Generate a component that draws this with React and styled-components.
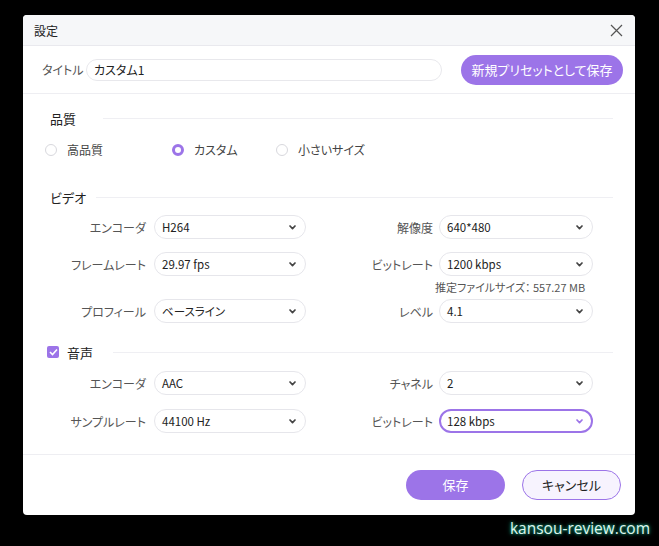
import React from 'react';
import styled, { createGlobalStyle } from 'styled-components';

const PURPLE = '#9c74e8';

const GlobalStyle = createGlobalStyle`
  html, body {
    margin: 0;
    padding: 0;
    background: #000;
  }
  body {
    font-family: 'Noto Sans CJK JP', 'Noto Sans', sans-serif;
    font-feature-settings: "palt";
  }
`;

const Page = styled.div`
  width: 659px;
  height: 546px;
  padding: 15px 0 0 23px;
  box-sizing: border-box;
  background: #000;
`;

const Dialog = styled.div`
  width: 612px;
  height: 500px;
  background: #fff;
  border-radius: 4px;
  overflow: hidden;
  display: flex;
  flex-direction: column;
`;

const TitleBar = styled.div`
  height: 30px;
  flex: none;
  background: #f6f7f9;
  border-bottom: 1px solid #e9e9ee;
  display: flex;
  align-items: center;
  justify-content: space-between;
  padding: 0 12px 0 11px;
  font-size: 12px;
  color: #222;
`;

const CloseButton = styled.div`
  width: 14px;
  height: 14px;
  display: flex;
  align-items: center;
  justify-content: center;
`;

const PresetRow = styled.div`
  height: 47px;
  flex: none;
  border-bottom: 1px solid #eeeef2;
  display: flex;
  align-items: center;
  padding: 0 12px 0 19px;
`;

const PresetLabel = styled.span`
  width: 44px;
  font-size: 12px;
  color: #555;
`;

const TitleInput = styled.div`
  width: 356px;
  height: 22px;
  box-sizing: border-box;
  border: 1px solid #e8e8ec;
  border-radius: 11px;
  padding-left: 7px;
  display: flex;
  align-items: center;
  font-size: 12px;
  color: #222;
`;

const PresetButton = styled.div`
  margin-left: auto;
  width: 162px;
  height: 30px;
  border-radius: 15px;
  background: ${PURPLE};
  color: #fff;
  font-size: 13px;
  display: flex;
  align-items: center;
  justify-content: center;
`;

const Body = styled.div`
  flex: 1;
  padding: 14px 22px 0 0;
  display: flex;
  flex-direction: column;
`;

const Heading = styled.div`
  height: 20px;
  display: flex;
  align-items: center;
  padding-left: ${p => p.$indent}px;
  margin-top: ${p => p.$top || 0}px;
  font-size: 13px;
  color: #222;
  &::after {
    content: '';
    flex: 1;
    height: 1px;
    background: #efeff3;
    margin-left: ${p => p.$lineGap}px;
  }
`;

const RadioGroup = styled.div`
  display: grid;
  grid-template-columns: 127px 104px auto;
  padding-left: 22px;
  margin-top: 13px;
  height: 16px;
  align-items: center;
`;

const RadioItem = styled.div`
  display: flex;
  align-items: center;
  gap: 10px;
  font-size: 12px;
  color: #444;
`;

const RadioDot = styled.span`
  width: 12px;
  height: 12px;
  box-sizing: border-box;
  border-radius: 50%;
  border: ${p => (p.$on ? `3.5px solid ${PURPLE}` : '1px solid #d8d8dd')};
  background: #fff;
`;

const CheckBox = styled.span`
  width: 12px;
  height: 12px;
  border-radius: 2px;
  background: ${PURPLE};
  display: inline-flex;
  align-items: center;
  justify-content: center;
  margin-right: 8px;
`;

const FieldRow = styled.div`
  display: grid;
  grid-template-columns: 131px 152px 133px 154px;
  align-items: center;
  margin-top: ${p => p.$top}px;
`;

const Label = styled.div`
  text-align: right;
  padding-right: ${p => p.$pad || 8}px;
  font-size: 12px;
  color: #555;
`;

const Select = styled.div`
  height: 24px;
  box-sizing: border-box;
  border: ${p => (p.$focus ? `2px solid ${PURPLE}` : '1px solid #e6e6eb')};
  border-radius: 12px;
  display: flex;
  align-items: center;
  padding: 0 ${p => (p.$focus ? 8 : 9)}px 0 ${p => (p.$focus ? 6 : 7)}px;
  font-size: 11.5px;
  color: #222;
  span {
    flex: 1;
  }
`;

const Hint = styled.div`
  display: grid;
  grid-template-columns: 412px auto;
  margin-top: 4px;
  height: 14px;
  font-size: 11px;
  line-height: 14px;
  color: #555;
  div:last-child {
    grid-column: 2;
  }
`;

const Footer = styled.div`
  height: 59px;
  flex: none;
  border-top: 1px solid #eeeef2;
  display: flex;
  align-items: center;
  justify-content: flex-end;
  gap: 17px;
  padding: 0 14px 1px 0;
`;

const FooterButton = styled.div`
  width: 99px;
  height: 30px;
  box-sizing: border-box;
  border-radius: 15px;
  display: flex;
  align-items: center;
  justify-content: center;
  font-size: 13px;
  background: ${p => (p.$primary ? PURPLE : '#f7f3fe')};
  color: ${p => (p.$primary ? '#fff' : '#222')};
  border: ${p => (p.$primary ? 'none' : `1px solid ${PURPLE}`)};
`;

const Watermark = styled.div`
  width: 627px;
  text-align: right;
  margin-top: 2px;
  font-family: 'Open Sans', 'Noto Sans', sans-serif;
  font-size: 15.5px;
  color: #dff5ee;
  text-shadow: 0 0 3px #1fae8a, 0 0 5px #0e7a60;
`;

const Chevron = ({ color = '#444' }) => (
  <svg width="7" height="5" viewBox="0 0 7 5">
    <path d="M1 1 L3.5 3.6 L6 1" fill="none" stroke={color} strokeWidth="1.7" strokeLinecap="round" strokeLinejoin="round" />
  </svg>
);

const Dropdown = ({ value, focus }) => (
  <Select $focus={focus}>
    <span>{value}</span>
    <Chevron color={focus ? PURPLE : '#444'} />
  </Select>
);

const Field = ({ label, value, focus, pad }) => (
  <>
    <Label $pad={pad}>{label}</Label>
    <Dropdown value={value} focus={focus} />
  </>
);

const App = () => {
  return (
    <>
      <GlobalStyle />
      <Page>
        <Dialog>
          <TitleBar>
            <span>設定</span>
            <CloseButton>
              <svg width="13" height="13" viewBox="0 0 13 13">
                <path d="M1 1 L12 12 M12 1 L1 12" stroke="#555" strokeWidth="1.2" />
              </svg>
            </CloseButton>
          </TitleBar>
          <PresetRow>
            <PresetLabel>タイトル</PresetLabel>
            <TitleInput>カスタム1</TitleInput>
            <PresetButton>新規プリセットとして保存</PresetButton>
          </PresetRow>
          <Body>
            <Heading $indent={27} $lineGap={27}>品質</Heading>
            <RadioGroup>
              <RadioItem><RadioDot />高品質</RadioItem>
              <RadioItem><RadioDot $on />カスタム</RadioItem>
              <RadioItem><RadioDot />小さいサイズ</RadioItem>
            </RadioGroup>
            <Heading $indent={27} $lineGap={10} $top={30}>ビデオ</Heading>
            <FieldRow $top={8}>
              <Field label="エンコーダ" value="H264" />
              <Field label="解像度" value="640*480" pad={6} />
            </FieldRow>
            <FieldRow $top={13}>
              <Field label="フレームレート" value="29.97 fps" />
              <Field label="ビットレート" value="1200 kbps" pad={6} />
            </FieldRow>
            <Hint>
              <div />
              <div>推定ファイルサイズ： 557.27 MB</div>
            </Hint>
            <FieldRow $top={5}>
              <Field label="プロフィール" value="ベースライン" />
              <Field label="レベル" value="4.1" pad={6} />
            </FieldRow>
            <Heading $indent={24} $lineGap={20} $top={19}>
              <CheckBox>
                <svg width="9" height="8" viewBox="0 0 9 8">
                  <path d="M1 4 L3.5 6.5 L8 1.5" fill="none" stroke="#fff" strokeWidth="1.6" />
                </svg>
              </CheckBox>
              音声
            </Heading>
            <FieldRow $top={9}>
              <Field label="エンコーダ" value="AAC" />
              <Field label="チャネル" value="2" pad={6} />
            </FieldRow>
            <FieldRow $top={14}>
              <Field label="サンプルレート" value="44100 Hz" />
              <Field label="ビットレート" value="128 kbps" focus pad={6} />
            </FieldRow>
          </Body>
          <Footer>
            <FooterButton $primary>保存</FooterButton>
            <FooterButton>キャンセル</FooterButton>
          </Footer>
        </Dialog>
        <Watermark>kansou-review.com</Watermark>
      </Page>
    </>
  );
};

export default App;
